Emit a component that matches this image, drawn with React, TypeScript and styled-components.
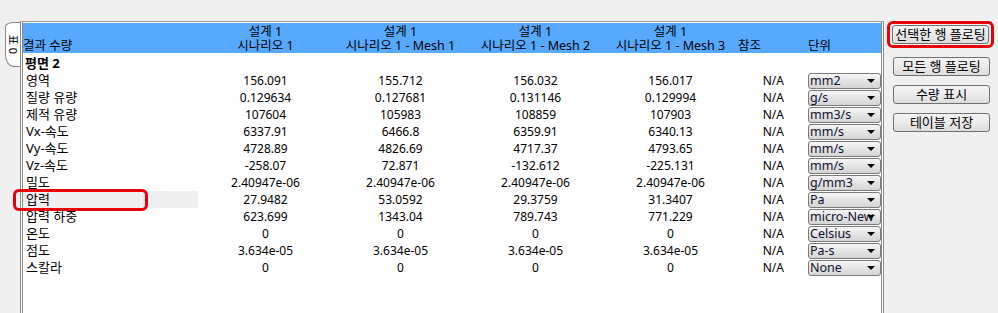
import React from "react"
import styled, { createGlobalStyle } from "styled-components"

const GlobalStyle = createGlobalStyle`
  body {
    margin: 0;
    background: #f0f0f0;
    font-family: "Noto Sans", "Noto Sans CJK KR", sans-serif;
    font-size: 12px;
    color: #000;
  }
`

const Page = styled.div`
  display: flex;
  align-items: flex-start;
  width: 998px;
  height: 313px;
  padding-top: 21px;
  box-sizing: border-box;
  overflow: hidden;
`
const TabStrip = styled.div`
  width: 20px;
  padding: 1px 0 0 5px;
  box-sizing: border-box;
`
const Tab = styled.div`
  width: 15px;
  height: 43px;
  background: #fff;
  border: 1px solid #8a8a8a;
  border-right: none;
  border-radius: 9px 0 0 9px / 4px 0 0 12px;
  display: flex;
  align-items: center;
  justify-content: center;
  & > span {
    transform: rotate(90deg);
    white-space: nowrap;
    font-size: 11px;
    line-height: 11px;
  }
`
const Panel = styled.div`
  width: 864px;
  height: 300px;
  box-sizing: border-box;
  border-top: 1px solid #9a9a9a;
  border-left: 3px double #8a8a8a;
  border-right: 3px double #8a8a8a;
  background: #fff;
  padding-top: 1px;
`
const Grid = styled.div`
  display: grid;
  grid-template-columns: 175px repeat(4, 135px) 50px 93px;
  grid-auto-rows: 17px;
  align-items: center;
`
const Header = styled.div`
  display: grid;
  grid-template-columns: 175px repeat(4, 135px) 50px 93px;
  height: 30px;
  background: #56a9fe;
  margin-bottom: 2px;
  font-size: 12.5px;
  line-height: 13px;
`
const HeadCell = styled.div<{ $align?: string; $pad?: number }>`
  display: flex;
  flex-direction: column;
  justify-content: flex-end;
  gap: 1px;
  text-align: ${p => p.$align || "center"};
  padding: 0 0 1px ${p => p.$pad || 0}px;
  white-space: nowrap;
  & > div {
    height: 13px;
  }
`
const Label = styled.div<{ $bold?: boolean; $selected?: boolean }>`
  position: relative;
  height: 17px;
  line-height: 17px;
  padding-left: ${p => (p.$bold ? 2 : 3)}px;
  font-weight: ${p => (p.$bold ? 700 : 400)};
  font-size: 13px;
  background: ${p => (p.$selected ? "#efefef" : "transparent")};
  white-space: nowrap;
`
const Value = styled.div`
  text-align: center;
  white-space: nowrap;
`
const Ref = styled.div`
  text-align: right;
  padding-right: 4px;
`
const Mark = styled.div`
  position: absolute;
  left: -10px;
  top: -2px;
  width: 135px;
  height: 22px;
  box-sizing: border-box;
  border: 3px solid #e8000b;
  border-radius: 6px;
`
const Select = styled.div`
  position: relative;
  margin-left: 20px;
  width: 73px;
  height: 16px;
  box-sizing: border-box;
  border: 1px solid #7a7a7a;
  border-radius: 3px;
  background: linear-gradient(#f6f6f6, #e4e4e4 50%, #d4d4d4);
  line-height: 14px;
  padding: 0 14px 0 1px;
  font-size: 12.5px;
  color: #101030;
  overflow: hidden;
  white-space: nowrap;
  &::after {
    content: "";
    position: absolute;
    right: 5px;
    top: 5px;
    border-left: 4px solid transparent;
    border-right: 4px solid transparent;
    border-top: 4px solid #000;
  }
`
const Side = styled.div`
  display: flex;
  flex-direction: column;
  gap: 9px;
  padding: 0 0 0 3px;
`
const Highlight = styled.div`
  border: 3px solid #e8000b;
  border-radius: 6px;
  padding: 1px 2px;
  width: 107px;
  box-sizing: border-box;
`
const Button = styled.div<{ $plain?: boolean }>`
  width: 97px;
  height: 19px;
  margin-left: ${p => (p.$plain ? 6 : 0)}px;
  box-sizing: border-box;
  border: 1px solid #707070;
  border-radius: 3px;
  background: linear-gradient(#f4f4f4, #ebebeb 50%, #dcdcdc);
  text-align: center;
  line-height: 17px;
  font-size: 13px;
  white-space: nowrap;
`

type Row = { name: string; vals: string[]; unit: string; selected?: boolean }

const rows: Row[] = [
  { name: "영역", vals: ["156.091", "155.712", "156.032", "156.017"], unit: "mm2" },
  { name: "질량 유량", vals: ["0.129634", "0.127681", "0.131146", "0.129994"], unit: "g/s" },
  { name: "제적 유량", vals: ["107604", "105983", "108859", "107903"], unit: "mm3/s" },
  { name: "Vx-속도", vals: ["6337.91", "6466.8", "6359.91", "6340.13"], unit: "mm/s" },
  { name: "Vy-속도", vals: ["4728.89", "4826.69", "4717.37", "4793.65"], unit: "mm/s" },
  { name: "Vz-속도", vals: ["-258.07", "72.871", "-132.612", "-225.131"], unit: "mm/s" },
  { name: "밀도", vals: ["2.40947e-06", "2.40947e-06", "2.40947e-06", "2.40947e-06"], unit: "g/mm3" },
  { name: "압력", vals: ["27.9482", "53.0592", "29.3759", "31.3407"], unit: "Pa", selected: true },
  { name: "압력 하중", vals: ["623.699", "1343.04", "789.743", "771.229"], unit: "micro-New" },
  { name: "온도", vals: ["0", "0", "0", "0"], unit: "Celsius" },
  { name: "점도", vals: ["3.634e-05", "3.634e-05", "3.634e-05", "3.634e-05"], unit: "Pa-s" },
  { name: "스칼라", vals: ["0", "0", "0", "0"], unit: "None" },
]

const scenarios = ["시나리오 1", "시나리오 1 - Mesh 1", "시나리오 1 - Mesh 2", "시나리오 1 - Mesh 3"]

const App: React.FC = () => {
  return (
    <Page>
      <GlobalStyle />
      <TabStrip>
        <Tab>
          <span>표 0</span>
        </Tab>
      </TabStrip>
      <Panel>
        <Header>
          <HeadCell $align="left">
            <div>결과 수량</div>
          </HeadCell>
          {scenarios.map(s => (
            <HeadCell key={s}>
              <div>설계 1</div>
              <div>{s}</div>
            </HeadCell>
          ))}
          <HeadCell $align="left">
            <div>참조</div>
          </HeadCell>
          <HeadCell $align="left" $pad={20}>
            <div>단위</div>
          </HeadCell>
        </Header>
        <Grid>
          <Label $bold>평면 2</Label>
          <div />
          <div />
          <div />
          <div />
          <div />
          <div />
          {rows.map(r => (
            <React.Fragment key={r.name}>
              <Label $selected={r.selected}>
                {r.name}
                {r.selected && <Mark />}
              </Label>
              {r.vals.map((v, i) => (
                <Value key={i}>{v}</Value>
              ))}
              <Ref>N/A</Ref>
              <Select>{r.unit}</Select>
            </React.Fragment>
          ))}
        </Grid>
      </Panel>
      <Side>
        <Highlight>
          <Button>선택한 행 플로팅</Button>
        </Highlight>
        <Button $plain>모든 행 플로팅</Button>
        <Button $plain>수량 표시</Button>
        <Button $plain>테이블 저장</Button>
      </Side>
    </Page>
  )
}

export default App
